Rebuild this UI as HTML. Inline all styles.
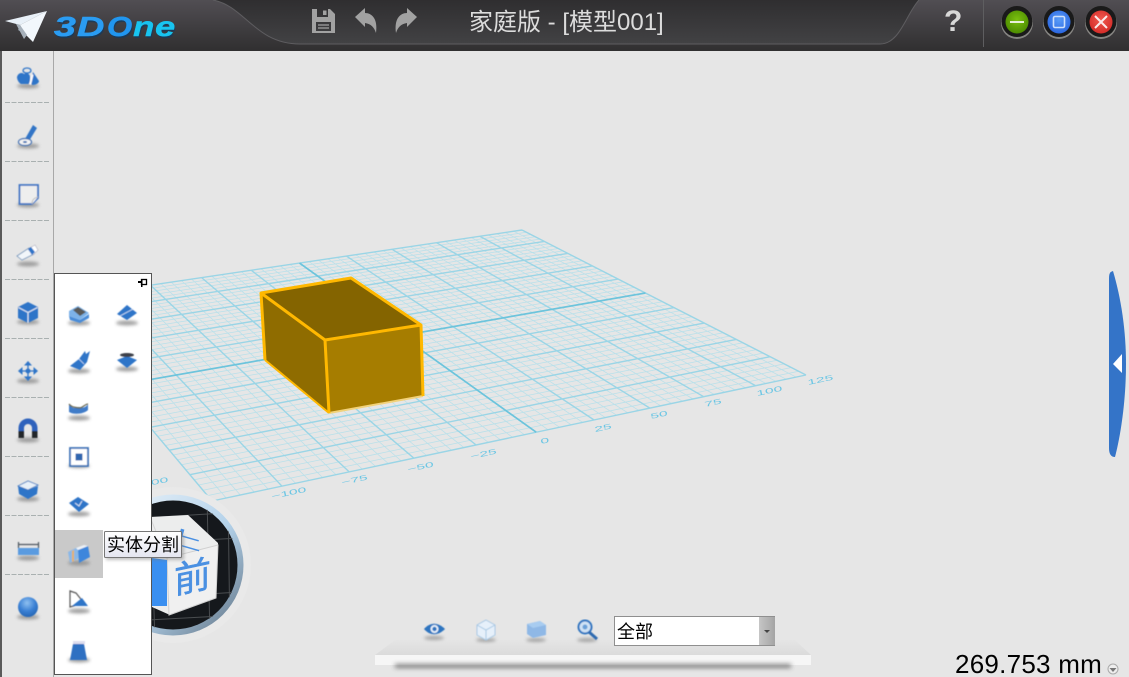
<!DOCTYPE html>
<html><head><meta charset="utf-8"><title>3DOne</title>
<style>
html,body{margin:0;padding:0;width:1129px;height:677px;overflow:hidden;background:#e6e6e6}
svg{display:block;position:absolute;left:0;top:0}
text{font-family:"Liberation Sans","Noto Sans CJK SC",sans-serif}
</style></head><body>
<svg id="s" width="1129" height="677" viewBox="0 0 1129 677" xmlns="http://www.w3.org/2000/svg">
<defs>
<linearGradient id="hb" x1="0" y1="0" x2="0" y2="1"><stop offset="0" stop-color="#514e53"/><stop offset="1" stop-color="#302f30"/></linearGradient>
<linearGradient id="hc" x1="0" y1="0" x2="0" y2="1"><stop offset="0" stop-color="#2f2e30"/><stop offset="1" stop-color="#424244"/></linearGradient>
<linearGradient id="tip" x1="0" y1="0" x2="0" y2="1"><stop offset="0" stop-color="#fff"/><stop offset="1" stop-color="#e4e5f0"/></linearGradient>
<linearGradient id="ring" x1="0" y1="0" x2="1" y2="1"><stop offset="0" stop-color="#eef5fb"/><stop offset=".55" stop-color="#b4d2ea"/><stop offset="1" stop-color="#5d7082"/></linearGradient>
<linearGradient id="tray" x1="0" y1="0" x2="0" y2="1"><stop offset="0" stop-color="#e5e5e5"/><stop offset="1" stop-color="#dbdbdb"/></linearGradient>
<linearGradient id="cbtn" x1="0" y1="0" x2="1" y2="0"><stop offset="0" stop-color="#c6c6c6"/><stop offset="1" stop-color="#a4a4a4"/></linearGradient>
<radialGradient id="sph" cx=".45" cy=".3" r=".75"><stop offset="0" stop-color="#8fc0f0"/><stop offset=".55" stop-color="#3a80d4"/><stop offset="1" stop-color="#2262b0"/></radialGradient>
<radialGradient id="gr" cx=".5" cy=".4" r=".6"><stop offset="0" stop-color="#7bc010"/><stop offset="1" stop-color="#4c8c00"/></radialGradient>
<radialGradient id="bl" cx=".5" cy=".4" r=".6"><stop offset="0" stop-color="#5a9cf8"/><stop offset="1" stop-color="#2a66e0"/></radialGradient>
<radialGradient id="rd" cx=".5" cy=".4" r=".6"><stop offset="0" stop-color="#f05a50"/><stop offset="1" stop-color="#d42c28"/></radialGradient>
<filter id="b2" x="-50%" y="-100%" width="200%" height="300%"><feGaussianBlur stdDeviation="1.6"/></filter>
<filter id="b3" x="-20%" y="-200%" width="140%" height="500%"><feGaussianBlur stdDeviation="2.5"/></filter>
<filter id="soft" x="-5%" y="-5%" width="110%" height="110%"><feGaussianBlur stdDeviation=".45"/></filter>
<filter id="lbl" x="-10%" y="-10%" width="120%" height="120%"><feGaussianBlur stdDeviation=".3"/></filter>
<clipPath id="cc"><circle cx="173" cy="565" r="65"/></clipPath>
</defs>

<rect width="1129" height="677" fill="#e6e6e6"/>

<!-- grid -->
<g id="grid"></g>
<g fill="#6cc6e4" font-size="9" filter="url(#lbl)">
<text transform="translate(272,499) rotate(-12) scale(1.75,.8)">−100</text>
<text transform="translate(342,485) rotate(-12) scale(1.75,.8)">−75</text>
<text transform="translate(408,472) rotate(-12) scale(1.75,.8)">−50</text>
<text transform="translate(471,459) rotate(-12) scale(1.75,.8)">−25</text>
<text transform="translate(541,444) rotate(-12) scale(1.75,.8)">0</text>
<text transform="translate(595,432) rotate(-12) scale(1.75,.8)">25</text>
<text transform="translate(651,419) rotate(-12) scale(1.75,.8)">50</text>
<text transform="translate(705,407) rotate(-12) scale(1.75,.8)">75</text>
<text transform="translate(757,396) rotate(-12) scale(1.75,.8)">100</text>
<text transform="translate(808,385) rotate(-12) scale(1.75,.8)">125</text>
<text transform="translate(134,489) rotate(-12) scale(1.75,.8)">−100</text>
</g>

<!-- box -->
<polygon points="261,293 351,278 421,325 325,340" fill="#846400"/>
<polygon points="261,293 325,340 329,413 265,360" fill="#8f6c00"/>
<polygon points="325,340 421,325 423,396 329,413" fill="#a67d00"/>
<path d="M265 360L329 413" stroke="#ffb800" stroke-width="2" fill="none"/>
<path d="M329 413L423 396" stroke="#f2d27a" stroke-width="2" fill="none"/>
<path d="M265 360L261 293L351 278L421 325L423 396M261 293L325 340L421 325M325 340L329 413" stroke="#ffb800" stroke-width="3" fill="none" stroke-linejoin="round"/>

<!-- view cube -->
<circle cx="173" cy="565" r="78" fill="#e9e9e9"/>
<circle cx="173" cy="565" r="70.500" fill="url(#ring)"/>
<circle cx="173" cy="565" r="64.500" fill="#15181c"/>
<g stroke="#4a4d50" stroke-width="1" fill="none" clip-path="url(#cc)">
<path d="M110 520L240 512M110 545L240 538M110 600L240 592M110 622L240 615M150 495L155 640M207 495L210 640M228 495L230 640"/>
</g>
<polygon points="130,530 150,517 188,515 218,543 216,598 170,615 152,607 130,600" fill="#eceded"/>
<polygon points="167,558 218,545 216,598 169,615" fill="#f0f0f0" stroke="#d0d0d0"/>
<path d="M167 558L150 517" stroke="#d6d6d6"/>
<polygon points="130,555 167,560 167,606 130,606" fill="#3a8ff0"/>
<text transform="translate(174,594) skewY(-12)" font-size="37" fill="#4a90e2" stroke="#4a90e2" stroke-width=".5">前</text>
<text transform="translate(158,539) rotate(16) scale(1.25,.55)" font-size="36" fill="#4a90e2">上</text>

<!-- header -->
<rect width="1129" height="51" fill="url(#hb)"/>
<path d="M213 0C245 6 255 44 300 44L880 44C900 44 906 14 919 0Z" fill="url(#hc)"/>
<path d="M213 0C245 6 255 44 300 44L880 44C900 44 906 14 919 0" fill="none" stroke="#5e5d60" stroke-width="1"/>
<rect x="983" y="0" width="1" height="47" fill="#5e5e60"/>
<!-- plane -->
<polygon points="5,21 47,11 20,25" fill="#e8f0f8"/>
<polygon points="47,11 33,42 24,33 20,25" fill="#f2f7fc"/>
<polygon points="20,25 24,33 26,35 18,30" fill="#8f9aa6"/>
<polygon points="20,25 16,24 24,39 27,35" fill="#a6b0ba"/>
<!-- logo -->
<g font-weight="bold" font-style="italic" font-size="28">
<g fill="#123a60" opacity=".7">
<text transform="translate(55,38) scale(1.4,1)">3</text>
<text transform="translate(78,38) scale(1.35,1)">D</text>
<text transform="translate(108,38) scale(1.15,1)">O</text>
<text transform="translate(134,38) scale(1.25,1)">n</text>
<text transform="translate(156,38) scale(1.3,1)">e</text>
</g>
<text transform="translate(54,36) scale(1.4,1)" fill="#2a9cf2" stroke="#2a9cf2" stroke-width=".6">3</text>
<text transform="translate(77,36) scale(1.35,1)" fill="#2a9cf2" stroke="#2a9cf2" stroke-width=".6">D</text>
<text transform="translate(107,36) scale(1.15,1)" fill="#2196ef" stroke="#2196ef" stroke-width=".6">O</text>
<text transform="translate(133,36) scale(1.25,1)" fill="#18c4f0" stroke="#18c4f0" stroke-width=".4">n</text>
<text transform="translate(155,36) scale(1.3,1)" fill="#18c4f0" stroke="#18c4f0" stroke-width=".4">e</text>
</g>
<!-- save -->
<path d="M312 9H330L335 14V33H312ZM317 9V17H328V9ZM323 10.500H326.500V15H323ZM316 22V31H331V22Z" fill="#a2a2a2" fill-rule="evenodd"/>
<path d="M318 25H329M318 28H329" stroke="#a2a2a2" stroke-width="1.300"/>
<!-- undo / redo -->
<path d="M355 17L365 8V13C372 13 378 19 376 33C374 27 371 24 365 23V27Z" fill="#a2a2a2"/>
<path d="M417 17L407 8V13C400 13 394 19 396 33C398 27 401 24 407 23V27Z" fill="#a2a2a2"/>
<text x="469" y="30" font-size="24" fill="#dcdcdc">家庭版 - [模型001]</text>
<text x="944" y="31" font-size="30" font-weight="bold" fill="#d8d8d8">?</text>
<!-- window buttons -->
<g>
<circle cx="1017" cy="23" r="16" fill="#b8b8b0" opacity=".6"/><circle cx="1017" cy="21.500" r="15.500" fill="#1a1a1a"/><circle cx="1017" cy="22" r="11.500" fill="url(#gr)"/>
<rect x="1010" y="21" width="14" height="2" fill="#e8f0d8"/>
<circle cx="1059" cy="23" r="16" fill="#b8b8b0" opacity=".6"/><circle cx="1059" cy="21.500" r="15.500" fill="#1a1a1a"/><circle cx="1059" cy="22" r="11.500" fill="url(#bl)"/>
<rect x="1053.500" y="16.500" width="11" height="11" rx="1.500" fill="none" stroke="#cfe0fa" stroke-width="1.600"/>
<circle cx="1101" cy="23" r="16" fill="#b8b8b0" opacity=".6"/><circle cx="1101" cy="21.500" r="15.500" fill="#1a1a1a"/><circle cx="1101" cy="22" r="11.500" fill="url(#rd)"/>
<path d="M1095 16L1107 28M1107 16L1095 28" stroke="#fbeaea" stroke-width="2"/>
</g>

<!-- sidebar -->
<rect x="0" y="51" width="53.500" height="626" fill="#e6e6e6"/>
<rect x="0" y="51" width="2" height="626" fill="#5a5a5a"/>
<rect x="53" y="51" width="1" height="626" fill="#a8a8a8"/>
<g stroke="#a9b0b0" stroke-width="1" stroke-dasharray="5 1.500">
<path d="M5 102.500H49M5 161.500H49M5 220.500H49M5 279.500H49M5 338.500H49M5 397.500H49M5 456.500H49M5 515.500H49M5 574.500H49"/>
</g>
<g fill="#8a8a8a" filter="url(#b2)" opacity=".8">
<ellipse cx="28" cy="86" rx="11" ry="2.500"/><ellipse cx="28" cy="146" rx="11" ry="2.500"/><ellipse cx="28" cy="205" rx="11" ry="2.500"/><ellipse cx="28" cy="264" rx="11" ry="2.500"/><ellipse cx="28" cy="322" rx="11" ry="2.500"/><ellipse cx="28" cy="381" rx="11" ry="2.500"/><ellipse cx="28" cy="440" rx="11" ry="2.500"/><ellipse cx="28" cy="499" rx="11" ry="2.500"/><ellipse cx="28" cy="558" rx="11" ry="2.500"/><ellipse cx="28" cy="617" rx="11" ry="2.500"/>
</g>
<g filter="url(#soft)">
<!-- 1 shapes -->
<path d="M17 77C18 73 22 72 24 74C27 72 30 74 30 77L30 84H21C19 83 17 80 17 77Z" fill="#2f74c8"/><path d="M30 84L33 72L39 81C39 83 36 85 33 85Z" fill="#2f74c8"/>
<path d="M29 84L32 74L33.500 75L31 85Z" fill="#fff"/><ellipse cx="27" cy="70.500" rx="4" ry="2.500" fill="none" stroke="#2f74c8" stroke-width="1.300"/>
<!-- 2 pencil -->
<path d="M33 125L37 128L29 141L25 139Z" fill="#3074c6"/><ellipse cx="25" cy="142" rx="6.500" ry="3.500" fill="#f3f3f3" stroke="#3a70b4" stroke-width="1.200"/><ellipse cx="25" cy="142" rx="2" ry="1" fill="#3a70b4"/>
<!-- 3 sheet -->
<path d="M19.500 185H38V198L32 204H19.500Z" fill="#eeeeee" stroke="#3f74c4" stroke-width="1.800"/><path d="M38 197C34 198 32 200 32 204" fill="#fff" stroke="#bbb" stroke-width="1"/>
<!-- 4 eraser -->
<path d="M17 256L29 248L34 254L22 260Z" fill="#f2f6fa" stroke="#6c90b8" stroke-width=".8"/><path d="M28 249L35 245L38 250L33 255Z" fill="#fff" stroke="#aab" stroke-width=".6"/><path d="M28 249L31 247L35 252L32 255Z" fill="#2f74c8"/>
<!-- 5 cube -->
<polygon points="28,302 38,307 38,318 28,323 18,318 18,307" fill="#2f74c8"/><path d="M18.500 307.500L28 312.500L37.500 307.500M28 312.500V323" fill="none" stroke="#dfe9f5" stroke-width="1.200"/>
<!-- 6 move -->
<path d="M28 361L32 365.500H24ZM28 381L32 376.500H24ZM18 371L22.500 367V375ZM38 371L33.500 367V375Z" fill="#2f74c8"/><path d="M28 365V377M22 371H34" stroke="#2f74c8" stroke-width="1.300"/><circle cx="28" cy="371" r="2.500" fill="#2f74c8"/>
<!-- 7 magnet -->
<path d="M18.500 438V428A9.500 9.500 0 0 1 37.500 428V438H32V428A4 4 0 0 0 24 428V438Z" fill="#2f62bc"/><rect x="18.500" y="431" width="5.500" height="7" fill="#23262a"/><rect x="32" y="431" width="5.500" height="7" fill="#23262a"/>
<!-- 8 box -->
<polygon points="18,486 28,490 38,486 37,494 28,499 19,494" fill="#2f74c8"/><polygon points="18,486 28,481 38,485 28,490" fill="#e8f0f8" stroke="#3f78c0" stroke-width=".8"/>
<!-- 9 measure -->
<path d="M18.500 542V548M38.500 542V548M18.500 544.500H38.500" stroke="#4d5660" stroke-width="1.200" fill="none"/><rect x="18" y="548" width="21" height="7" fill="#5a9be0"/>
<!-- 10 sphere -->
<circle cx="28" cy="607" r="10" fill="url(#sph)"/>
</g>

<!-- panel -->
<rect x="54.500" y="273.500" width="97" height="401" fill="#fff" stroke="#555"/>
<rect x="55" y="530" width="48" height="48" fill="#c9c9c9"/>
<rect x="141.500" y="279.500" width="5" height="5" fill="#fff" stroke="#000" stroke-width="1.300"/><rect x="138" y="281" width="3.500" height="2" fill="#000"/><rect x="141" y="279" width="1.500" height="8" fill="#000"/>
<g fill="#8a8a8a" filter="url(#b2)" opacity=".8">
<ellipse cx="79" cy="323" rx="11" ry="2.500"/><ellipse cx="127" cy="323" rx="11" ry="2.500"/><ellipse cx="79" cy="371" rx="11" ry="2.500"/><ellipse cx="127" cy="369" rx="11" ry="2.500"/><ellipse cx="79" cy="418" rx="11" ry="2.500"/><ellipse cx="79" cy="466" rx="11" ry="2"/><ellipse cx="79" cy="514" rx="11" ry="2.500"/><ellipse cx="79" cy="563" rx="11" ry="2.500"/><ellipse cx="79" cy="611" rx="11" ry="2.500"/><ellipse cx="79" cy="660" rx="11" ry="2.500"/>
</g>
<g filter="url(#soft)">
<polygon points="69,311 78,306 89,313 80,320 69,316" fill="#7db2e8"/><polygon points="73,310 78,307 86,312 80,316" fill="#5a5a58"/><polygon points="69,316 80,320 89,314 89,318 80,323 70,320" fill="#4a8cd8"/>
<polygon points="117,314 127,305 137,313 127,320" fill="#2f74c8"/><path d="M120 316L133 309" stroke="#d0e2f6" stroke-width=".8"/>
<path d="M70 366L79 359L85 351L86 354L90 351L87 362L80 370Z" fill="#2f74c8"/><path d="M79 359L84 364" stroke="#cfe0f4" stroke-width=".8"/>
<polygon points="117,360 127,356 137,360 127,368" fill="#2f74c8"/><ellipse cx="127" cy="355" rx="7" ry="2" fill="#3c4048"/>
<path d="M69 404C72 408 74 409 79 407C84 409 87 406 88 404V410C84 414 74 415 69 412Z" fill="#3f7cc8"/><path d="M69 404C72 408 76 407 79 408C83 408 85 404 88 404" fill="none" stroke="#6a6a50" stroke-width="1.300"/>
<rect x="70" y="448" width="18" height="18" fill="#fff" stroke="#3f74b8" stroke-width="1.800"/><rect x="75.500" y="453.500" width="7" height="7" fill="#2f66b0"/>
<polygon points="69,503 78,497 89,504 79,512" fill="#2f74c8"/><path d="M75 503L79 506L82 501" stroke="#dbe8f6" fill="none" stroke-width="1"/>
<polygon points="68,552 78,547 79,558 70,563" fill="#8ab8e8"/><polygon points="72,551 74,550 74,561 72,562" fill="#e8b060"/><polygon points="78,550 88,546 90,557 79,563" fill="#3d86dc"/><polygon points="76,548 84,545 88,546 78,550" fill="#eef3f8"/>
<path d="M70 591L76 593L84 603L70 607Z" fill="none" stroke="#555" stroke-width="1.200"/><polygon points="72,606 82,598 88,606" fill="#2f74c8"/>
<polygon points="73,644 84,644 87,660 70,660" fill="#2f6fc2"/><rect x="73" y="641" width="12" height="3" fill="#dde" />
</g>

<!-- tooltip -->
<rect x="106" y="534" width="78" height="26" fill="#777" opacity=".45" filter="url(#b2)"/>
<rect x="104.500" y="531.500" width="77" height="26" rx="1" fill="url(#tip)" stroke="#767676"/>
<text x="107" y="551" font-size="18" fill="#000">实体分割</text>

<!-- handle -->
<path d="M1113 271C1109 272 1109 275 1109 280V448C1109 454 1111 457 1115 457C1122 430 1126 395 1126 364C1126 330 1121 298 1113 271Z" fill="#3474c8"/>
<polygon points="1113,364 1122,354 1122,373" fill="#fff"/>

<!-- bottom tray -->
<polygon points="395,640 795,640 811,655 375,655" fill="url(#tray)"/>
<rect x="375" y="655" width="436" height="10" fill="#f6f6f6"/>
<rect x="395" y="664" width="396" height="4" fill="#444" opacity=".65" filter="url(#b3)"/>
<g fill="#8a8a8a" filter="url(#b2)" opacity=".7">
<ellipse cx="434" cy="638" rx="10" ry="2"/><ellipse cx="486" cy="640" rx="10" ry="2"/><ellipse cx="536" cy="640" rx="10" ry="2"/><ellipse cx="587" cy="640" rx="10" ry="2"/>
</g>
<g filter="url(#soft)">
<path d="M424 629C430 622 438 622 445 629C438 636 430 636 424 629Z" fill="#2f74c0"/><circle cx="434.500" cy="629" r="4" fill="#eaf2fa"/><circle cx="434.500" cy="629" r="2.200" fill="#2f74c0"/>
<polygon points="486,620 495,625 495,635 486,640 477,635 477,625" fill="#e6f0fa" stroke="#a8c8e4" stroke-width="1"/><path d="M477 625L486 630L495 625M486 630V640" fill="none" stroke="#a8c8e4"/>
<polygon points="527,624 540,621 546,625 546,635 533,638 527,634" fill="#8fb8e6"/><polygon points="527,624 540,621 546,625 533,628" fill="#a8ccf0"/>
<circle cx="585" cy="627" r="6.500" fill="#cfe2f4" stroke="#2f74c0" stroke-width="2"/><path d="M589 632L597 639" stroke="#2f6ab0" stroke-width="3"/><circle cx="585" cy="627" r="2.500" fill="#6aa0d8"/>
</g>

<!-- combo -->
<rect x="614.500" y="616.500" width="160" height="29" fill="#fff" stroke="#8f8f8f"/>
<rect x="759" y="617" width="16" height="28" fill="url(#cbtn)"/>
<path d="M764 630H770L767 633Z" fill="#444"/>
<text x="617" y="638" font-size="18" fill="#000">全部</text>

<!-- readout -->
<text x="955" y="673" font-size="26" fill="#000" letter-spacing=".25">269.753 mm</text>
<circle cx="1113" cy="669" r="5" fill="#eee" stroke="#aaa"/>
<path d="M1109.500 668H1116.500L1113 672Z" fill="#777"/>
</svg>
<script>
(function(){
var P=[[212,501],[806,375],[522,230],[44,301]];
var x0=P[0][0],y0=P[0][1],x1=P[1][0],y1=P[1][1],x2=P[2][0],y2=P[2][1],x3=P[3][0],y3=P[3][1];
var dx1=x1-x2,dx2=x3-x2,dx3=x0-x1+x2-x3,dy1=y1-y2,dy2=y3-y2,dy3=y0-y1+y2-y3;
var den=dx1*dy2-dx2*dy1,g=(dx3*dy2-dx2*dy3)/den,h=(dx1*dy3-dx3*dy1)/den;
var a=x1-x0+g*x1,b=x3-x0+h*x3,d=y1-y0+g*y1,e=y3-y0+h*y3;
function m(u,v){var w=g*u+h*v+1;return ((a*u+b*v+x0)/w).toFixed(1)+" "+((d*u+e*v+y0)/w).toFixed(1);}
var min="",maj="",axis="",N=50;
for(var i=0;i<=N;i++){var t=i/N;
 var l1="M"+m(t,0)+"L"+m(t,1),l2="M"+m(0,t)+"L"+m(1,t);
 if(i==25){axis+=l1+l2;}
 else if(i%5==0){maj+=l1+l2;}
 else{min+=l1+l2;}
}
var NS="http://www.w3.org/2000/svg",G=document.getElementById("grid");
function add(dv,c,w){var p=document.createElementNS(NS,"path");p.setAttribute("d",dv);p.setAttribute("stroke",c);p.setAttribute("stroke-width",w);p.setAttribute("fill","none");G.appendChild(p);}
add(min,"#b9e0ea",".75");add(maj,"#9ad5e6","1.4");add(axis,"#6cc4dc","1.7");
})();
</script>
</body></html>
